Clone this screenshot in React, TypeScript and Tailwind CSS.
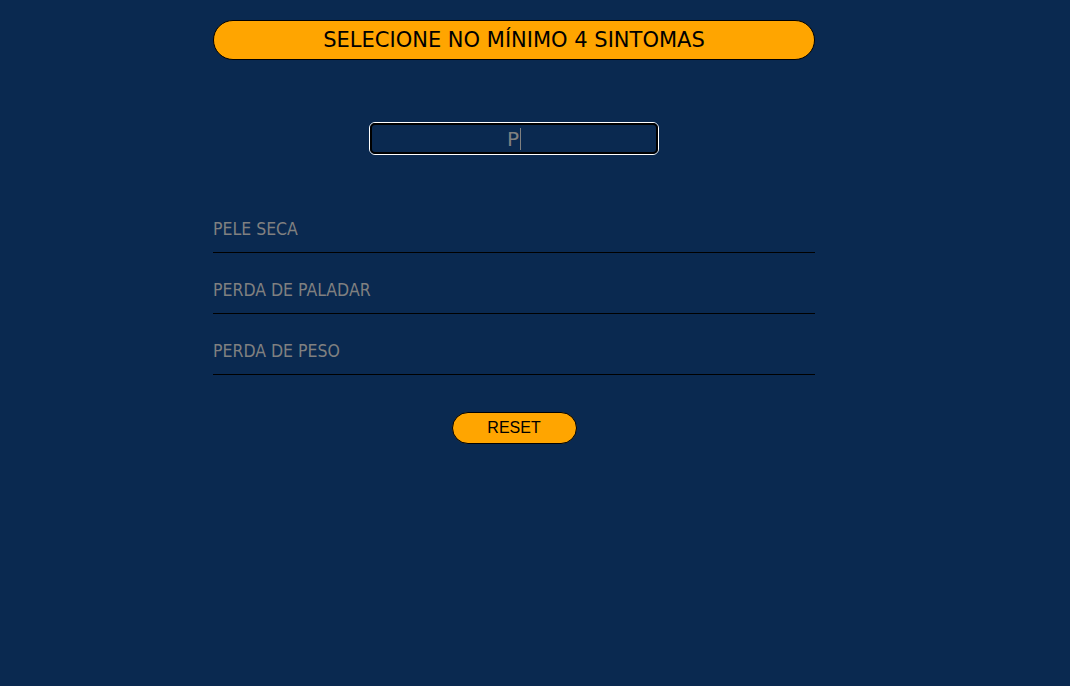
const symptoms = ["PELE SECA", "PERDA DE PALADAR", "PERDA DE PESO"];

export default function App() {
  return (
    <div className="min-h-[686px] w-full bg-[#0a2950] font-['DejaVu_Sans',sans-serif]">
      <div className="ml-[213px] flex w-[602px] flex-col pt-5">
        <div className="flex h-10 items-center justify-center rounded-full border border-black bg-[#ffa500] pt-[2px] text-[21px] text-black">
          SELECIONE NO MÍNIMO 4 SINTOMAS
        </div>

        <div className="mt-[62px] flex justify-center">
          <div className="flex h-[33px] w-[290px] items-center justify-center rounded-[6px] border border-white">
            <div className="flex h-full w-full items-center justify-center rounded-[5px] border-2 border-black text-[20px] text-[#808080]">
              <span>P</span>
              <span className="ml-px h-[22px] w-px bg-[#808080]" />
            </div>
          </div>
        </div>

        <ul className="mt-[37px]">
          {symptoms.map((s) => (
            <li
              key={s}
              className="border-b border-black pt-[27px] pb-[12px] font-['DejaVu_Sans_Condensed','DejaVu_Sans',sans-serif] text-[17.5px] leading-[21px] text-[#808080]"
            >
              {s}
            </li>
          ))}
        </ul>

        <div className="mt-[37px] flex justify-center">
          <button className="h-[32px] w-[125px] rounded-full border border-black bg-[#ffa500] font-['Liberation_Sans',sans-serif] text-[16px] text-black">
            RESET
          </button>
        </div>
      </div>
    </div>
  );
}
